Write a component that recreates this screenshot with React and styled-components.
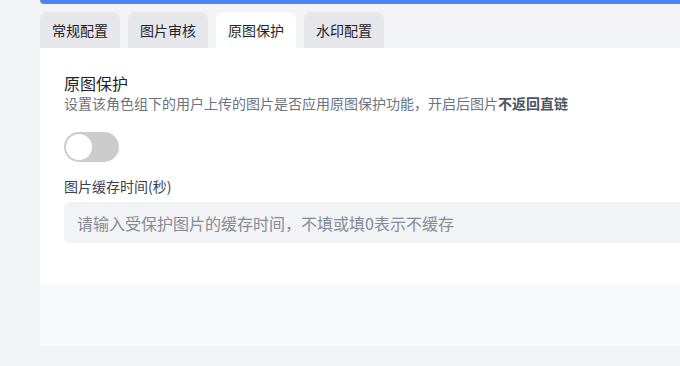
import React, { useState } from "react";
import styled, { createGlobalStyle } from "styled-components";

const Global = createGlobalStyle`
  html, body {
    margin: 0;
    padding: 0;
    background: #f2f3f5;
    overflow: hidden;
    font-family: "Noto Sans CJK SC", "Noto Sans", "Liberation Sans", sans-serif;
  }
`;

const Page = styled.div`
  padding-left: 40px;
  height: 366px;
  display: flex;
  flex-direction: column;
`;

const TopBar = styled.div`
  height: 4px;
  background: #4b84f6;
  border-bottom-left-radius: 4px;
`;

const Tabs = styled.div`
  display: flex;
  gap: 8px;
  margin-top: 8px;
`;

const Tab = styled.button`
  width: 80px;
  height: 36px;
  border: none;
  border-radius: 8px 8px 0 0;
  background: ${(p) => (p.$active ? "#ffffff" : "#e5e7eb")};
  color: #1f2329;
  font-family: inherit;
  font-size: 14px;
  padding: 0;
  cursor: pointer;
`;

const Panel = styled.div`
  background: #ffffff;
  padding: 24px 0 41px 24px;
  display: flex;
  flex-direction: column;
`;

const Title = styled.div`
  font-size: 16px;
  line-height: 22px;
  color: #1f2329;
`;

const Desc = styled.div`
  font-size: 14px;
  line-height: 18px;
  color: #6b7280;
  b {
    color: #4b5563;
    font-weight: 700;
  }
`;

const Switch = styled.button`
  margin-top: 20px;
  width: 55px;
  height: 30px;
  border-radius: 15px;
  border: none;
  padding: 0;
  background: ${(p) => (p.$on ? "#4b84f6" : "#cccccc")};
  position: relative;
  cursor: pointer;
`;

const Knob = styled.span`
  position: absolute;
  top: 2px;
  left: ${(p) => (p.$on ? "27px" : "2px")};
  width: 26px;
  height: 26px;
  border-radius: 50%;
  background: #ffffff;
  transition: left 0.2s;
`;

const Label = styled.div`
  margin-top: 14px;
  font-size: 14px;
  line-height: 20px;
  color: #374151;
`;

const Input = styled.input`
  margin-top: 6px;
  height: 41px;
  box-sizing: border-box;
  border: none;
  outline: none;
  border-radius: 6px 0 0 6px;
  background: #f2f3f5;
  padding: 0 13px;
  font-family: inherit;
  font-size: 16px;
  color: #1f2329;
  &::placeholder {
    color: #868b94;
  }
`;

const Footer = styled.div`
  height: 62px;
  background: #f8f9fa;
`;

export default function App() {
  const [tab, setTab] = useState(2);
  const [on, setOn] = useState(false);
  const tabs = ["常规配置", "图片审核", "原图保护", "水印配置"];
  return (
    <>
      <Global />
      <Page>
        <TopBar />
        <Tabs>
          {tabs.map((t, i) => (
            <Tab key={t} $active={i === tab} onClick={() => setTab(i)}>
              {t}
            </Tab>
          ))}
        </Tabs>
        <Panel>
          <Title>原图保护</Title>
          <Desc>
            设置该角色组下的用户上传的图片是否应用原图保护功能，开启后图片<b>不返回直链</b>
          </Desc>
          <Switch $on={on} onClick={() => setOn(!on)}>
            <Knob $on={on} />
          </Switch>
          <Label>图片缓存时间(秒)</Label>
          <Input placeholder="请输入受保护图片的缓存时间，不填或填0表示不缓存" />
        </Panel>
        <Footer />
      </Page>
    </>
  );
}
